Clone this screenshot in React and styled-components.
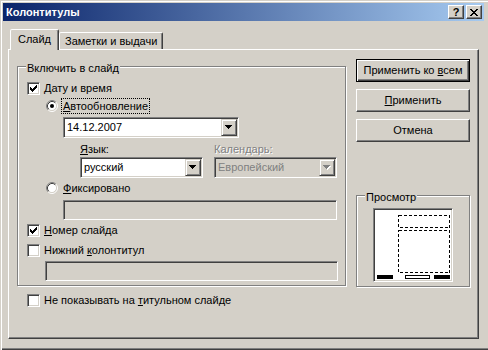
import React from "react";
import styled, { createGlobalStyle, css } from "styled-components";

const FACE = "#d4d0c8";
const HI = "#ffffff";
const SH = "#808080";
const DK = "#404040";

const GlobalStyle = createGlobalStyle`
  *, *::before, *::after { box-sizing: border-box; }
  html, body { margin: 0; padding: 0; background: ${FACE}; overflow: hidden; }
  body {
    font-family: "Liberation Sans", Arial, sans-serif;
    font-size: 11px;
    line-height: 13px;
    color: #000;
  }
  u { text-decoration: underline; text-underline-offset: 1px; }
`;

const sunken = css`
  border: 1px solid;
  border-color: ${SH} ${HI} ${HI} ${SH};
  box-shadow: inset 1px 1px 0 ${DK}, inset -1px -1px 0 ${FACE};
`;

const Window = styled.div`
  width: 488px;
  height: 350px;
  display: flex;
  flex-direction: column;
  padding: 3px 4px 0 3px;
  background: ${FACE};
  box-shadow: inset 1px 1px 0 ${FACE}, inset 2px 2px 0 ${HI},
    inset 0 -1px 0 ${DK}, inset 0 -2px 0 ${SH};
`;

const TitleBar = styled.div`
  flex: none;
  height: 18px;
  display: flex;
  align-items: center;
  padding: 0 2px 0 3px;
  background: linear-gradient(to right, #0a246a, #a6caf0);
`;

const Title = styled.span`
  flex: 1;
  color: #fff;
  font-weight: bold;
`;

const CaptionGroup = styled.div`
  display: flex;
  gap: 2px;
`;

const CaptionButton = styled.span`
  width: 16px;
  height: 14px;
  display: flex;
  align-items: center;
  justify-content: center;
  background: ${FACE};
  border: 1px solid;
  border-color: ${HI} ${DK} ${DK} ${HI};
  box-shadow: inset -1px -1px 0 ${SH};
  font-weight: bold;
  font-size: 11px;
  line-height: 11px;
`;

const Body = styled.div`
  flex: 1;
  display: flex;
  flex-direction: column;
  padding: 8px 0 0 5px;
`;

const TabStrip = styled.div`
  display: flex;
  align-items: flex-end;
  height: 20px;
  padding-left: 2px;
  position: relative;
  z-index: 1;
`;

const Tab = styled.div`
  height: ${(p) => (p.$active ? 21 : 17)}px;
  margin-bottom: ${(p) => (p.$active ? -1 : 0)}px;
  padding: ${(p) => (p.$active ? "3px 7px 0" : "2px 5px 0")};
  background: ${FACE};
  border: 1px solid;
  border-bottom: none;
  border-color: ${HI} ${DK} transparent ${HI};
  box-shadow: inset -1px 0 0 ${SH};
  border-radius: 2px 2px 0 0;
  white-space: nowrap;
`;

const Panel = styled.div`
  width: 471px;
  height: 290px;
  display: flex;
  align-items: flex-start;
  gap: 10px;
  padding: 9px 0 0 8px;
  border: 1px solid;
  border-color: ${HI} ${DK} ${DK} ${HI};
  box-shadow: inset -1px -1px 0 ${SH};
`;

const LeftCol = styled.div`
  display: flex;
  flex-direction: column;
  margin-top: 7px;
`;

const RightCol = styled.div`
  width: 114px;
  display: flex;
  flex-direction: column;
  gap: 7px;
`;

const GroupBox = styled.div`
  position: relative;
  flex: none;
  width: ${(p) => p.$w}px;
  height: ${(p) => p.$h}px;
  display: flex;
  flex-direction: column;
  border: 1px solid ${SH};
  box-shadow: inset 1px 1px 0 ${HI}, 1px 1px 0 ${HI};
`;

const OptionsGroup = styled(GroupBox)`
  padding-left: 9px;
`;

const PreviewGroup = styled(GroupBox)`
  margin-top: 46px;
  align-items: center;
  padding-top: 12px;
`;

const GroupLabel = styled.span`
  position: absolute;
  top: -5px;
  left: 8px;
  padding: 0 1px;
  background: ${FACE};
  white-space: nowrap;
`;

const Row = styled.div`
  display: flex;
  align-items: center;
  flex: none;
  margin: ${(p) => p.$mt || 0}px 0 0 ${(p) => p.$indent || 0}px;
`;

const CheckRow = styled(Row)`
  height: 13px;
  gap: 4px;
  white-space: nowrap;
`;

const RadioRow = styled(Row)`
  height: 16px;
  gap: 3px;
  white-space: nowrap;
`;

const CheckBox = styled.span`
  width: 13px;
  height: 13px;
  flex: none;
  display: flex;
  align-items: center;
  justify-content: center;
  background: #fff;
  ${sunken}
`;

const RadioText = styled.span`
  border: 1px dotted ${(p) => (p.$focus ? "#000" : "transparent")};
  padding: 1px 1px 0 1px;
  line-height: 13px;
`;

const Combo = styled.div`
  width: ${(p) => p.$w}px;
  height: 21px;
  flex: none;
  display: flex;
  align-items: stretch;
  padding: 1px;
  background: ${(p) => (p.$disabled ? FACE : "#fff")};
  color: ${(p) => (p.$disabled ? SH : "#000")};
  ${sunken}
`;

const ComboText = styled.span`
  flex: 1;
  display: flex;
  align-items: center;
  padding-left: 2px;
  white-space: nowrap;
`;

const DropButton = styled.span`
  width: 16px;
  flex: none;
  display: flex;
  align-items: center;
  justify-content: center;
  background: ${FACE};
  border: 1px solid;
  border-color: ${FACE} ${DK} ${DK} ${FACE};
  box-shadow: inset 1px 1px 0 ${HI}, inset -1px -1px 0 ${SH};
`;

const Field = styled.div`
  width: ${(p) => p.$w}px;
  height: 20px;
  flex: none;
  margin: ${(p) => p.$mt}px 0 0 ${(p) => p.$indent}px;
  background: ${FACE};
  ${sunken}
`;

const LangGrid = styled.div`
  display: grid;
  grid-template-columns: 123px 123px;
  grid-template-rows: 13px 21px;
  column-gap: 11px;
  row-gap: 1px;
  margin: 5px 0 0 53px;
`;

const FieldLabel = styled.span`
  white-space: nowrap;
  color: ${(p) => (p.$disabled ? SH : "#000")};
  text-shadow: ${(p) => (p.$disabled ? `1px 1px 0 ${HI}` : "none")};
`;

const PushButton = styled.button`
  width: 114px;
  height: 23px;
  margin: 0;
  padding: 0;
  font: inherit;
  color: #000;
  background: ${FACE};
  border: 1px solid;
  border-color: ${(p) => (p.$default ? "#000" : `${HI} ${DK} ${DK} ${HI}`)};
  box-shadow: ${(p) =>
    p.$default
      ? `inset 1px 1px 0 ${HI}, inset -1px -1px 0 ${DK}, inset -2px -2px 0 ${SH}`
      : `inset -1px -1px 0 ${SH}`};
  line-height: 13px;
  white-space: nowrap;
`;

const PreviewBox = styled.div`
  width: 80px;
  height: 74px;
  padding: 1px;
  background: #fff;
  ${sunken}
  display: flex;
`;

const CheckMark = () => (
  <svg width="7" height="7" viewBox="0 0 7 7" shapeRendering="crispEdges">
    <path
      d="M0 2h1v3H0zM1 3h1v3H1zM2 4h1v3H2zM3 3h1v3H3zM4 2h1v3H4zM5 1h1v3H5zM6 0h1v3H6z"
      fill="#000"
    />
  </svg>
);

const Check = ({ checked }) => <CheckBox>{checked && <CheckMark />}</CheckBox>;

const RadioIcon = ({ checked }) => (
  <svg width="12" height="12" viewBox="0 0 12 12" style={{ flex: "none" }}>
    <circle cx="6" cy="6" r="4.5" fill="#fff" />
    <path d="M2.11 9.89A5.5 5.5 0 0 1 9.89 2.11" stroke={SH} fill="none" />
    <path d="M9.89 2.11A5.5 5.5 0 0 1 2.11 9.89" stroke={HI} fill="none" />
    <path d="M2.82 9.18A4.5 4.5 0 0 1 9.18 2.82" stroke={DK} fill="none" />
    <path d="M9.18 2.82A4.5 4.5 0 0 1 2.82 9.18" stroke={FACE} fill="none" />
    {checked && <circle cx="6" cy="6" r="2" fill="#000" />}
  </svg>
);

const ARROW = "M0 0h7v1H0zM1 1h5v1H1zM2 2h3v1H2zM3 3h1v1H3z";

const Arrow = ({ disabled }) => (
  <svg width="8" height="5" viewBox="0 0 8 5" shapeRendering="crispEdges">
    {disabled && <path d={ARROW} fill={HI} transform="translate(1 1)" />}
    <path d={ARROW} fill={disabled ? SH : "#000"} />
  </svg>
);

const CloseGlyph = () => (
  <svg width="8" height="7" viewBox="0 0 8 7" shapeRendering="crispEdges">
    <path
      d="M0 0h2v1H0zM6 0h2v1H6zM1 1h2v1H1zM5 1h2v1H5zM2 2h4v1H2zM3 3h2v1H3zM2 4h4v1H2zM1 5h2v1H1zM5 5h2v1H5zM0 6h2v1H0zM6 6h2v1H6z"
      fill="#000"
    />
  </svg>
);

const PreviewDrawing = () => (
  <svg width="76" height="70" viewBox="0 0 76 70" shapeRendering="crispEdges">
    <rect x="23.5" y="5.5" width="51" height="12" fill="none" stroke="#000" strokeDasharray="3 2" />
    <rect x="23.5" y="20.5" width="51" height="42" fill="none" stroke="#000" strokeDasharray="3 2" />
    <rect x="2" y="65" width="16" height="4" fill="#000" />
    <rect x="30.5" y="65.5" width="24" height="3" fill="none" stroke="#000" />
    <rect x="59" y="65" width="16" height="4" fill="#000" />
  </svg>
);

const ComboBox = ({ w, disabled, children }) => (
  <Combo $w={w} $disabled={disabled}>
    <ComboText>{children}</ComboText>
    <DropButton>
      <Arrow disabled={disabled} />
    </DropButton>
  </Combo>
);

export default function App() {
  return (
    <>
      <GlobalStyle />
      <Window>
        <TitleBar>
          <Title>Колонтитулы</Title>
          <CaptionGroup>
            <CaptionButton>?</CaptionButton>
            <CaptionButton>
              <CloseGlyph />
            </CaptionButton>
          </CaptionGroup>
        </TitleBar>
        <Body>
          <TabStrip>
            <Tab $active>Слайд</Tab>
            <Tab>Заметки и выдачи</Tab>
          </TabStrip>
          <Panel>
            <LeftCol>
              <OptionsGroup $w={329} $h={220}>
                <GroupLabel>Включить в слайд</GroupLabel>
                <CheckRow $mt={15}>
                  <Check checked />
                  <span>
                    <u>Д</u>ату и время
                  </span>
                </CheckRow>
                <RadioRow $mt={3} $indent={19}>
                  <RadioIcon checked />
                  <RadioText $focus>
                    <u>А</u>втообновление
                  </RadioText>
                </RadioRow>
                <Row $mt={3} $indent={36}>
                  <ComboBox w={176}>14.12.2007</ComboBox>
                </Row>
                <LangGrid>
                  <FieldLabel>
                    <u>Я</u>зык:
                  </FieldLabel>
                  <FieldLabel $disabled>
                    Кален<u>д</u>арь:
                  </FieldLabel>
                  <ComboBox w={123}>русский</ComboBox>
                  <ComboBox w={123} disabled>
                    Европейский
                  </ComboBox>
                </LangGrid>
                <RadioRow $mt={2} $indent={19}>
                  <RadioIcon />
                  <RadioText>
                    <u>Ф</u>иксировано
                  </RadioText>
                </RadioRow>
                <Field $w={274} $mt={4} $indent={36} />
                <CheckRow $mt={4}>
                  <Check checked />
                  <span>
                    <u>Н</u>омер слайда
                  </span>
                </CheckRow>
                <CheckRow $mt={7}>
                  <Check />
                  <span>
                    Нижний <u>к</u>олонтитул
                  </span>
                </CheckRow>
                <Field $w={293} $mt={4} $indent={18} />
              </OptionsGroup>
              <CheckRow $mt={8} $indent={10}>
                <Check />
                <span>
                  Не показывать на <u>т</u>итульном слайде
                </span>
              </CheckRow>
            </LeftCol>
            <RightCol>
              <PushButton $default>
                Применить ко <u>в</u>сем
              </PushButton>
              <PushButton>
                <u>П</u>рименить
              </PushButton>
              <PushButton>Отмена</PushButton>
              <PreviewGroup $w={114} $h={92}>
                <GroupLabel>Просмотр</GroupLabel>
                <PreviewBox>
                  <PreviewDrawing />
                </PreviewBox>
              </PreviewGroup>
            </RightCol>
          </Panel>
        </Body>
      </Window>
    </>
  );
}
